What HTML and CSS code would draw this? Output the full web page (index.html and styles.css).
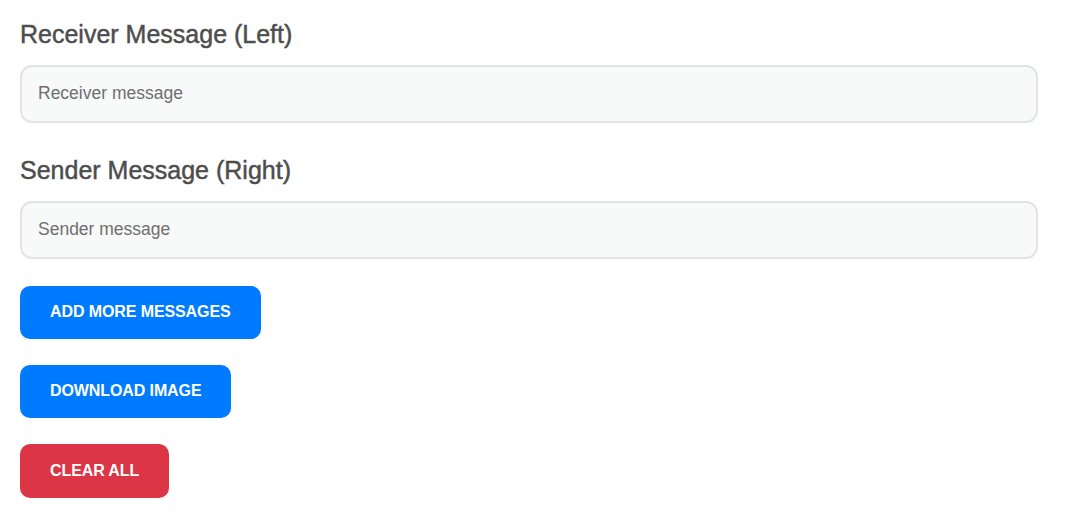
FILE: index.html
```html
<!DOCTYPE html>
<html>
<head>
<meta charset="utf-8">
<link rel="stylesheet" href="styles.css">
</head>
<body>
<div class="panel">
  <div class="field">
    <label class="field-label">Receiver Message (Left)</label>
    <input class="field-input" type="text" placeholder="Receiver message">
  </div>
  <div class="field">
    <label class="field-label">Sender Message (Right)</label>
    <input class="field-input" type="text" placeholder="Sender message">
  </div>
  <div class="actions">
    <button class="btn btn-blue">ADD MORE MESSAGES</button>
    <button class="btn btn-blue">DOWNLOAD IMAGE</button>
    <button class="btn btn-red">CLEAR ALL</button>
  </div>
</div>
</body>
</html>
```
FILE: styles.css
```css
* { box-sizing: border-box; }
html, body { margin: 0; background: #fff; }
body {
  font-family: "Liberation Sans", Arial, sans-serif;
  padding: 19px 20px 20px 20px;
}
.panel {
  max-width: 1018px;
  display: flex;
  flex-direction: column;
}
.field {
  display: flex;
  flex-direction: column;
  gap: 16px;
  margin-bottom: 32px;
}
.field:nth-child(2) { margin-bottom: 27px; }
.field-label {
  font-size: 25px;
  line-height: 30px;
  color: #4d4d4d;
  -webkit-text-stroke: 0.45px #4d4d4d;
}
.field-input {
  width: 100%;
  height: 58px;
  border: 2px solid #e3e3e3;
  border-radius: 12px;
  background: #f8f9f9;
  padding: 0 16px 1px 16px;
  font-family: "Liberation Sans", Arial, sans-serif;
  font-size: 17.5px;
  color: #333;
  outline: none;
}
.field-input::placeholder { color: #6f6f6f; }
.actions {
  display: flex;
  flex-direction: column;
  align-items: flex-start;
  gap: 26px;
}
.btn {
  border: none;
  border-radius: 10px;
  padding: 0 30px 1px 30px;
  height: 53px;
  font-family: "Liberation Sans", Arial, sans-serif;
  font-size: 16px;
  font-weight: bold;
  letter-spacing: -0.1px;
  color: #fff;
}
.btn-blue { background: #007bff; }
.btn-red { background: #dc3545; height: 54px; }
```
